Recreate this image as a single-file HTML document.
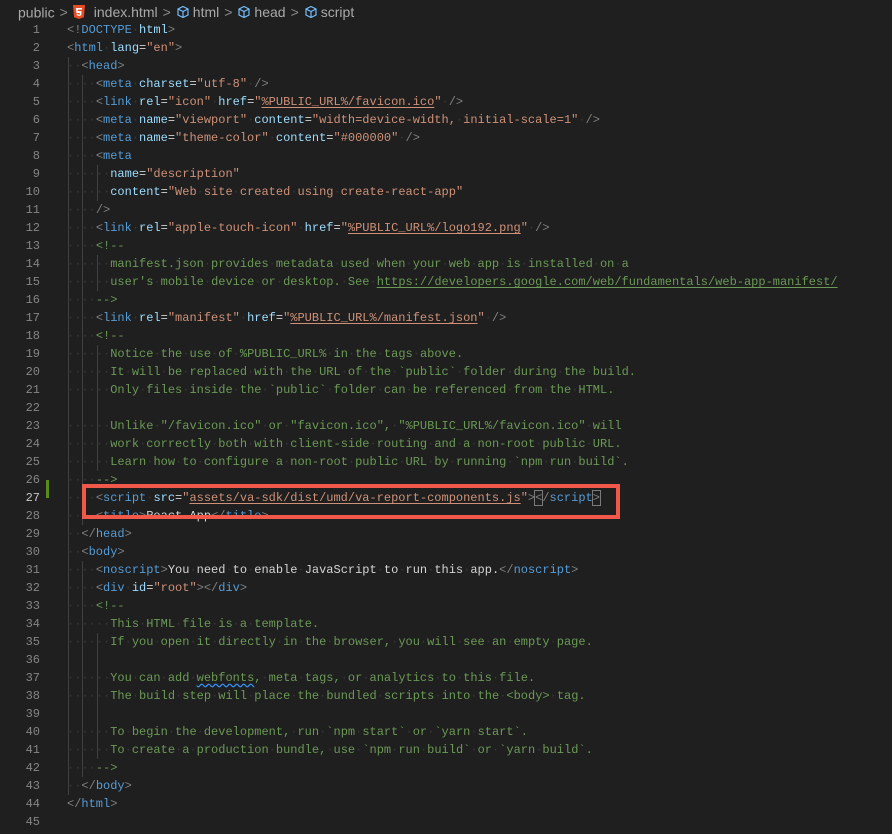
<!DOCTYPE html>
<html><head><meta charset="utf-8">
<style>
html,body{margin:0;padding:0;background:#1f1f1f;width:892px;height:834px;overflow:hidden;position:relative}
#bc{position:absolute;top:2px;left:18px;height:18px;font:14px "Liberation Sans",sans-serif;color:#a9a9a9;white-space:nowrap;line-height:18px}
#bc span{vertical-align:middle}
#bc svg{vertical-align:middle}
.sep{color:#8a8a8a;margin:0 5px}
.ln{position:absolute;left:0;width:40px;text-align:right;font:12px "Liberation Mono",monospace;color:#858585;line-height:18px}
.cl{position:absolute;left:67px;font:12px "Liberation Mono",monospace;line-height:18px;white-space:pre;color:#d4d4d4}
.t{color:#569cd6}.p{color:#808080}.a{color:#9cdcfe}.s{color:#ce9178}.c{color:#6a9955}.x{color:#d4d4d4}
.u{text-decoration:underline;text-underline-offset:2px}
.w{color:#383838}
.g{position:absolute;width:1px;background:#404040}
</style></head><body>
<div id="bc"><span>public</span><span class="sep">&gt;</span><svg width="12" height="14" viewBox="0 0 12 14"><path d="M0 0h12l-1.1 12.3L6 14 1.1 12.3z" fill="#e44d26"/><path d="M3 3h6l-.2 1.6H4.7l.1 1.5h3.8l-.4 4.2L6 11l-2.2-.7-.1-1.6h1.4l.1.7 .8.3.8-.3.1-1.4H3.4z" fill="#fff"/></svg><span style="margin-left:9px">index.html</span><span class="sep">&gt;</span><svg width="14" height="14" viewBox="0 0 14 14"><path d="M7 1.5l5 2.5v6l-5 2.5-5-2.5V4zM2 4l5 2.5L12 4M7 6.5v6" fill="none" stroke="#75beff" stroke-width="1.2"/></svg><span style="margin-left:3px">html</span><span class="sep">&gt;</span><svg width="14" height="14" viewBox="0 0 14 14"><path d="M7 1.5l5 2.5v6l-5 2.5-5-2.5V4zM2 4l5 2.5L12 4M7 6.5v6" fill="none" stroke="#75beff" stroke-width="1.2"/></svg><span style="margin-left:3px">head</span><span class="sep">&gt;</span><svg width="14" height="14" viewBox="0 0 14 14"><path d="M7 1.5l5 2.5v6l-5 2.5-5-2.5V4zM2 4l5 2.5L12 4M7 6.5v6" fill="none" stroke="#75beff" stroke-width="1.2"/></svg><span style="margin-left:3px">script</span></div>

<div class="g" style="left:68px;top:57px;height:738px"></div>
<div class="g" style="left:82px;top:75px;height:450px"></div>
<div class="g" style="left:82px;top:561px;height:216px"></div>
<div class="g" style="left:97px;top:165px;height:36px"></div>
<div class="g" style="left:97px;top:255px;height:36px"></div>
<div class="g" style="left:97px;top:345px;height:126px"></div>
<div class="g" style="left:97px;top:633px;height:126px"></div>

<div style="position:absolute;left:46px;top:480px;width:3px;height:18px;background:#5a8a1a"></div>

<div id="code">
<div class="cl" style="top:21px"><span class="p">&lt;!</span><span class="t">DOCTYPE</span> <span class="a">html</span><span class="p">&gt;</span></div>
<div class="cl" style="top:39px"><span class="p">&lt;</span><span class="t">html</span> <span class="a">lang</span><span class="x">=</span><span class="s">"en"</span><span class="p">&gt;</span></div>
<div class="cl" style="top:57px">  <span class="p">&lt;</span><span class="t">head</span><span class="p">&gt;</span></div>
<div class="cl" style="top:75px">    <span class="p">&lt;</span><span class="t">meta</span> <span class="a">charset</span><span class="x">=</span><span class="s">"utf-8"</span> <span class="p">/&gt;</span></div>
<div class="cl" style="top:93px">    <span class="p">&lt;</span><span class="t">link</span> <span class="a">rel</span><span class="x">=</span><span class="s">"icon"</span> <span class="a">href</span><span class="x">=</span><span class="s">"<span class="u">%PUBLIC_URL%/favicon.ico</span>"</span> <span class="p">/&gt;</span></div>
<div class="cl" style="top:111px">    <span class="p">&lt;</span><span class="t">meta</span> <span class="a">name</span><span class="x">=</span><span class="s">"viewport"</span> <span class="a">content</span><span class="x">=</span><span class="s">"width=device-width, initial-scale=1"</span> <span class="p">/&gt;</span></div>
<div class="cl" style="top:129px">    <span class="p">&lt;</span><span class="t">meta</span> <span class="a">name</span><span class="x">=</span><span class="s">"theme-color"</span> <span class="a">content</span><span class="x">=</span><span class="s">"#000000"</span> <span class="p">/&gt;</span></div>
<div class="cl" style="top:147px">    <span class="p">&lt;</span><span class="t">meta</span></div>
<div class="cl" style="top:165px">      <span class="a">name</span><span class="x">=</span><span class="s">"description"</span></div>
<div class="cl" style="top:183px">      <span class="a">content</span><span class="x">=</span><span class="s">"Web site created using create-react-app"</span></div>
<div class="cl" style="top:201px">    <span class="p">/&gt;</span></div>
<div class="cl" style="top:219px">    <span class="p">&lt;</span><span class="t">link</span> <span class="a">rel</span><span class="x">=</span><span class="s">"apple-touch-icon"</span> <span class="a">href</span><span class="x">=</span><span class="s">"<span class="u">%PUBLIC_URL%/logo192.png</span>"</span> <span class="p">/&gt;</span></div>
<div class="cl c" style="top:237px">    &lt;!--</div>
<div class="cl c" style="top:255px">      manifest.json provides metadata used when your web app is installed on a</div>
<div class="cl c" style="top:273px">      user's mobile device or desktop. See <span class="u">https://developers.google.com/web/fundamentals/web-app-manifest/</span></div>
<div class="cl c" style="top:291px">    --&gt;</div>
<div class="cl" style="top:309px">    <span class="p">&lt;</span><span class="t">link</span> <span class="a">rel</span><span class="x">=</span><span class="s">"manifest"</span> <span class="a">href</span><span class="x">=</span><span class="s">"<span class="u">%PUBLIC_URL%/manifest.json</span>"</span> <span class="p">/&gt;</span></div>
<div class="cl c" style="top:327px">    &lt;!--</div>
<div class="cl c" style="top:345px">      Notice the use of %PUBLIC_URL% in the tags above.</div>
<div class="cl c" style="top:363px">      It will be replaced with the URL of the `public` folder during the build.</div>
<div class="cl c" style="top:381px">      Only files inside the `public` folder can be referenced from the HTML.</div>
<div class="cl c" style="top:399px"></div>
<div class="cl c" style="top:417px">      Unlike "/favicon.ico" or "favicon.ico", "%PUBLIC_URL%/favicon.ico" will</div>
<div class="cl c" style="top:435px">      work correctly both with client-side routing and a non-root public URL.</div>
<div class="cl c" style="top:453px">      Learn how to configure a non-root public URL by running `npm run build`.</div>
<div class="cl c" style="top:471px">    --&gt;</div>
<div class="cl" style="top:489px">    <span class="p">&lt;</span><span class="t">script</span> <span class="a">src</span><span class="x">=</span><span class="s">"<span class="u">assets/va-sdk/dist/umd/va-report-components.js</span>"</span><span class="p">&gt;<span style="outline:1px solid #7a7a7a">&lt;</span>/</span><span class="t">script</span><span class="p" style="outline:1px solid #7a7a7a">&gt;</span></div>
<div class="cl" style="top:507px">    <span class="p">&lt;</span><span class="t">title</span><span class="p">&gt;</span><span class="x">React App</span><span class="p">&lt;/</span><span class="t">title</span><span class="p">&gt;</span></div>
<div class="cl" style="top:525px">  <span class="p">&lt;/</span><span class="t">head</span><span class="p">&gt;</span></div>
<div class="cl" style="top:543px">  <span class="p">&lt;</span><span class="t">body</span><span class="p">&gt;</span></div>
<div class="cl" style="top:561px">    <span class="p">&lt;</span><span class="t">noscript</span><span class="p">&gt;</span><span class="x">You need to enable JavaScript to run this app.</span><span class="p">&lt;/</span><span class="t">noscript</span><span class="p">&gt;</span></div>
<div class="cl" style="top:579px">    <span class="p">&lt;</span><span class="t">div</span> <span class="a">id</span><span class="x">=</span><span class="s">"root"</span><span class="p">&gt;&lt;/</span><span class="t">div</span><span class="p">&gt;</span></div>
<div class="cl c" style="top:597px">    &lt;!--</div>
<div class="cl c" style="top:615px">      This HTML file is a template.</div>
<div class="cl c" style="top:633px">      If you open it directly in the browser, you will see an empty page.</div>
<div class="cl c" style="top:651px"></div>
<div class="cl c" style="top:669px">      You can add <span style="text-decoration:underline wavy #3794ff;text-underline-offset:2px">webfonts</span>, meta tags, or analytics to this file.</div>
<div class="cl c" style="top:687px">      The build step will place the bundled scripts into the &lt;body&gt; tag.</div>
<div class="cl c" style="top:705px"></div>
<div class="cl c" style="top:723px">      To begin the development, run `npm start` or `yarn start`.</div>
<div class="cl c" style="top:741px">      To create a production bundle, use `npm run build` or `yarn build`.</div>
<div class="cl c" style="top:759px">    --&gt;</div>
<div class="cl" style="top:777px">  <span class="p">&lt;/</span><span class="t">body</span><span class="p">&gt;</span></div>
<div class="cl" style="top:795px"><span class="p">&lt;/</span><span class="t">html</span><span class="p">&gt;</span></div>
</div>

<div id="nums"></div>
<div style="position:absolute;left:82px;top:484px;width:530px;height:27px;border:4px solid #f0584a"></div>

<script>
var n=document.getElementById('nums'),h='';
for(var i=1;i<=45;i++){h+='<div class="ln" style="top:'+(21+(i-1)*18)+'px;'+(i==27?'color:#c6c6c6':'')+'">'+i+'</div>';}
n.innerHTML=h;
function walk(el){
  for(var c=el.firstChild;c;c=c.nextSibling){
    if(c.nodeType==3){
      if(c.nodeValue.indexOf(' ')>=0){
        var parts=c.nodeValue.split(' '),f=document.createDocumentFragment();
        parts.forEach(function(p,k){
          if(k>0){var s=document.createElement('span');s.className='w';s.textContent='\u00b7';f.appendChild(s);}
          if(p)f.appendChild(document.createTextNode(p));
        });
        var nx=c.nextSibling;el.replaceChild(f,c);c=nx?nx.previousSibling:el.lastChild;
      }
    } else if(c.nodeType==1) walk(c);
  }
}
walk(document.getElementById('code'));
</script>
</body></html>
